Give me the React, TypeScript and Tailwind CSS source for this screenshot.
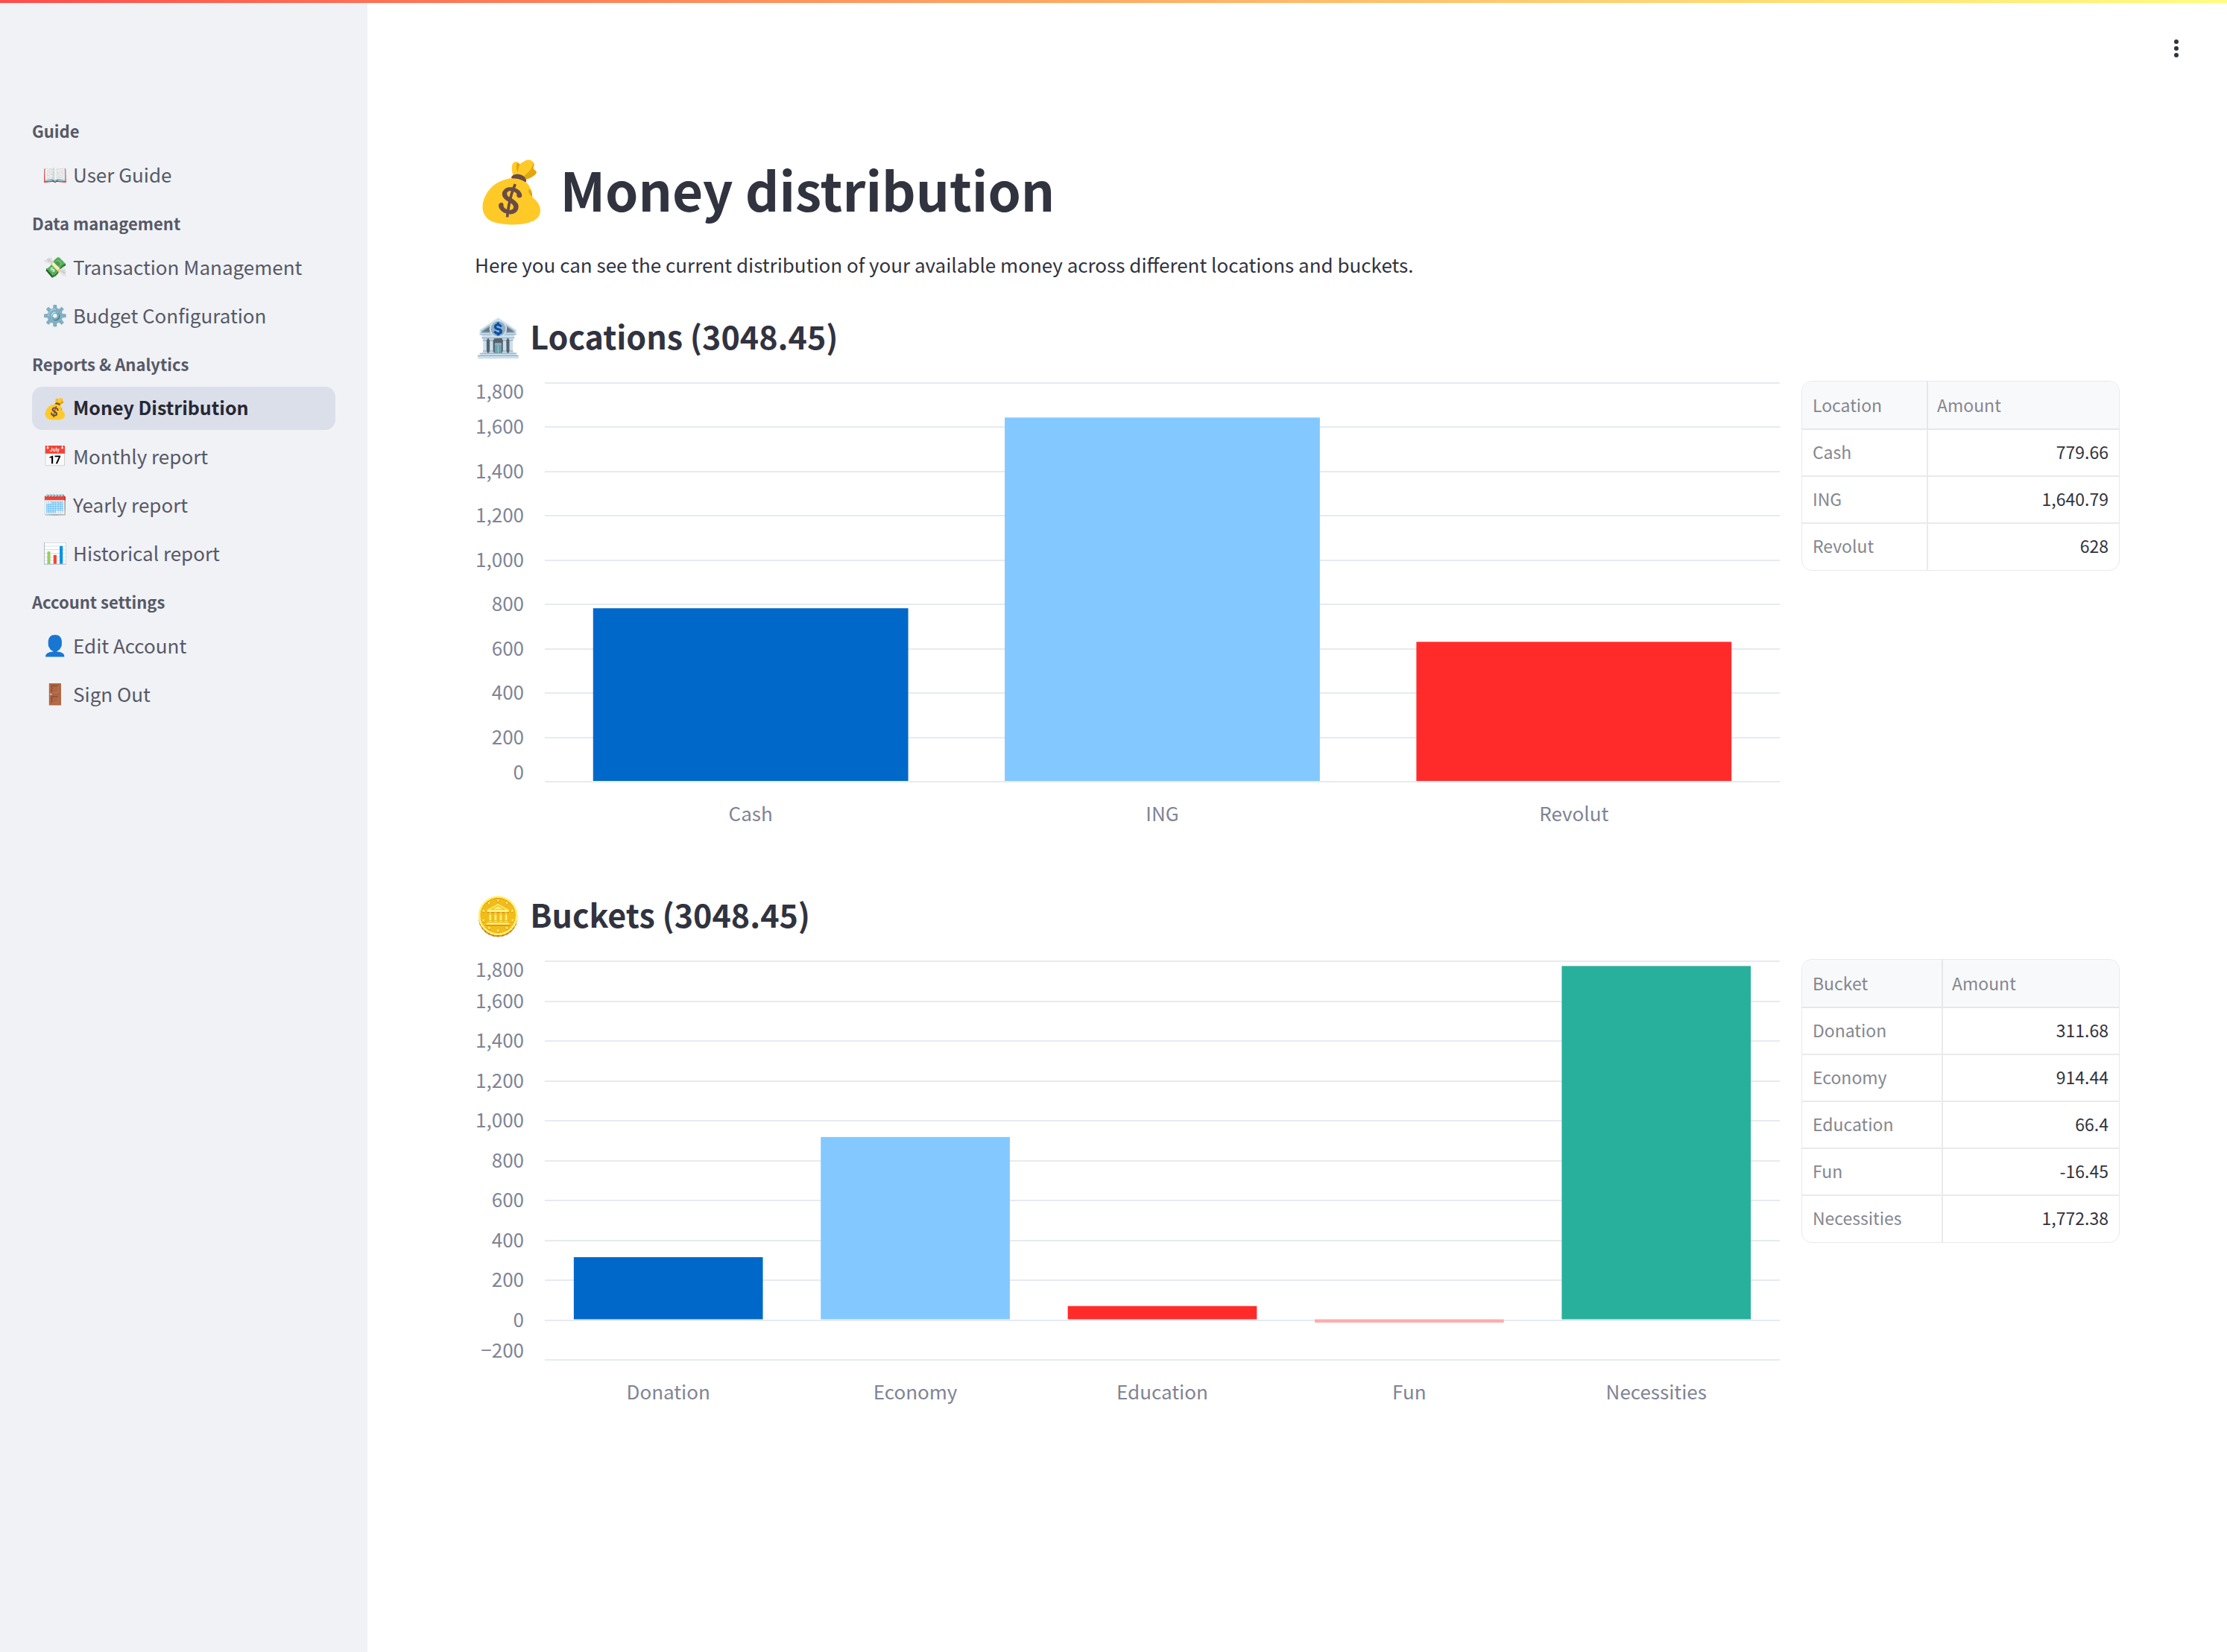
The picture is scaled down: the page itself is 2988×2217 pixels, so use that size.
type NavItem = { icon: string; label: string; active?: boolean };
type Row = { name: string; value: number; color: string };

const NAV: { title: string; items: NavItem[] }[] = [
  { title: "Guide", items: [{ icon: "📖", label: "User Guide" }] },
  {
    title: "Data management",
    items: [
      { icon: "💸", label: "Transaction Management" },
      { icon: "⚙️", label: "Budget Configuration" },
    ],
  },
  {
    title: "Reports & Analytics",
    items: [
      { icon: "💰", label: "Money Distribution", active: true },
      { icon: "📅", label: "Monthly report" },
      { icon: "🗓️", label: "Yearly report" },
      { icon: "📊", label: "Historical report" },
    ],
  },
  {
    title: "Account settings",
    items: [
      { icon: "👤", label: "Edit Account" },
      { icon: "🚪", label: "Sign Out" },
    ],
  },
];

const LOCATIONS: Row[] = [
  { name: "Cash", value: 779.66, color: "#0068c9" },
  { name: "ING", value: 1640.79, color: "#83c9ff" },
  { name: "Revolut", value: 628, color: "#ff2b2b" },
];

const BUCKETS: Row[] = [
  { name: "Donation", value: 311.68, color: "#0068c9" },
  { name: "Economy", value: 914.44, color: "#83c9ff" },
  { name: "Education", value: 66.4, color: "#ff2b2b" },
  { name: "Fun", value: -16.45, color: "#ffabab" },
  { name: "Necessities", value: 1772.38, color: "#29b09d" },
];

const PLOT_TOP = 2;
const PLOT_HEIGHT = 535;
const STEP = 200;
const MAX = 1800;

function tickLabel(n: number) {
  return n < 0 ? "\u2212" + Math.abs(n) : n.toLocaleString("en-US");
}

function BarChart({ rows, min, label }: { rows: Row[]; min: number; label: string }) {
  const ticks: number[] = [];
  for (let t = min; t <= MAX; t += STEP) ticks.push(t);
  const y = (v: number) => PLOT_TOP + ((MAX - v) / (MAX - min)) * PLOT_HEIGHT;
  const band = 100 / rows.length;
  const bar = band * 0.7655;

  return (
    <div className="flex min-w-0" role="img" aria-label={label}>
      <svg className="h-[620px] w-[94px] shrink-0 overflow-visible">
        {ticks.map((t) => (
          <text
            key={t}
            x={66}
            y={y(t) + 10 + (t === MAX ? 12 : t === min ? -12 : 0)}
            textAnchor="end"
            className="fill-[#808495] text-[26px]"
          >
            {tickLabel(t)}
          </text>
        ))}
      </svg>
      <svg className="h-[620px] min-w-0 flex-1">
        {ticks.map((t) => (
          <rect key={t} x="0" y={Math.round(y(t))} width="100%" height="2" fill="#e6eaf1" />
        ))}
        {rows.map((r, i) => (
          <g key={r.name}>
            <rect
              x={`${i * band + (band - bar) / 2}%`}
              width={`${bar}%`}
              y={Math.min(y(r.value), y(0))}
              height={Math.abs(y(r.value) - y(0))}
              fill={r.color}
            />
            <text
              x={`${(i + 0.5) * band}%`}
              y={PLOT_TOP + PLOT_HEIGHT + 54}
              textAnchor="middle"
              className="fill-[#808495] text-[26px]"
            >
              {r.name}
            </text>
          </g>
        ))}
      </svg>
    </div>
  );
}

function DataTable({ heading, rows, firstCol }: { heading: string; rows: Row[]; firstCol: string }) {
  return (
    <div className="self-start overflow-hidden rounded-[14px] border border-[#e8e9eb]">
      <table className="w-full table-fixed border-collapse text-[23px] leading-[30px]">
        <thead>
          <tr className="h-16 border-b-2 border-[#e6e7eb] bg-[#f8f9fb] text-left text-[#85878f]">
            <th scope="col" className={`${firstCol} border-r-2 border-[#e6e7eb] px-3.5 pb-0.5 font-normal`}>
              {heading}
            </th>
            <th scope="col" className="px-3 pb-0.5 font-normal">
              Amount
            </th>
          </tr>
        </thead>
        <tbody>
          {rows.map((r) => (
            <tr key={r.name} className="h-[63px] border-b-2 border-[#e9eaec] last:border-b-0">
              <td className="border-r-2 border-[#e9eaec] px-3.5 pb-1 text-[#85878f]">{r.name}</td>
              <td className="px-3.5 pb-1 text-right text-[#31333f]">{r.value.toLocaleString("en-US")}</td>
            </tr>
          ))}
        </tbody>
      </table>
    </div>
  );
}

function Section({
  icon,
  title,
  heading,
  rows,
  min,
  firstCol,
}: {
  icon: string;
  title: string;
  heading: string;
  rows: Row[];
  min: number;
  firstCol: string;
}) {
  return (
    <section className="flex flex-col gap-[29px]">
      <h2 className="flex h-16 items-center gap-3 text-[43px] leading-[64px] font-semibold">
        <span className="pb-0.5 text-[50px]">{icon}</span>
        <span>{title}</span>
      </h2>
      <div className="grid grid-cols-[4.1fr_1fr] gap-[29px]">
        <BarChart rows={rows} min={min} label={title} />
        <DataTable heading={heading} rows={rows} firstCol={firstCol} />
      </div>
    </section>
  );
}

export default function App() {
  return (
    <div className="flex min-h-screen flex-col bg-white font-['Noto_Sans_CJK_SC','Noto_Color_Emoji',sans-serif] text-[#31333f]">
      <div className="absolute inset-x-0 top-0 h-1 bg-linear-to-r from-[#ff4b4b] to-[#fffd80]" />
      <div className="flex flex-1">
        <aside className="w-[493px] shrink-0 bg-[#f0f2f6] px-[43px] pt-[155px]">
          <nav>
            {NAV.map((group) => (
              <div key={group.title} className="mb-[15px] flex flex-col gap-[7px]">
                <h3 className="pb-1 text-[22px] leading-[40px] font-semibold text-[#575966]">{group.title}</h3>
                {group.items.map((item) => (
                  <a
                    key={item.label}
                    href="#"
                    aria-current={item.active ? "page" : undefined}
                    className={
                      item.active
                        ? "flex h-[58px] items-center gap-1.5 rounded-[14px] bg-[#dbdfea] px-[13px] pb-0.5 text-[25px] font-semibold text-[#262833]"
                        : "flex h-[58px] items-center gap-1.5 rounded-[14px] px-[13px] pb-1 text-[26px] text-[#575966]"
                    }
                  >
                    <span className="w-9 text-center text-[27px]">{item.icon}</span>
                    <span>{item.label}</span>
                  </a>
                ))}
              </div>
            ))}
          </nav>
        </aside>
        <main className="min-w-0 flex-1 px-36 pt-[205px]">
          <h1 className="flex h-24 items-center gap-4 text-[71px] leading-[96px] font-bold">
            <span className="pb-1 text-[79px]">💰</span>
            <span>Money distribution</span>
          </h1>
          <p className="mt-8 mb-[41px] text-[26px] leading-[44px]">
            Here you can see the current distribution of your available money across different locations and buckets.
          </p>
          <div className="flex flex-col gap-[63px]">
            <Section
              icon="🏦"
              title="Locations (3048.45)"
              heading="Location"
              rows={LOCATIONS}
              min={0}
              firstCol="w-[168px]"
            />
            <Section
              icon="🪙"
              title="Buckets (3048.45)"
              heading="Bucket"
              rows={BUCKETS}
              min={-200}
              firstCol="w-[188px]"
            />
          </div>
        </main>
      </div>
      <button
        type="button"
        aria-label="Main menu"
        className="absolute top-9 right-10 flex size-14 items-center justify-center"
      >
        <svg viewBox="0 0 28 28" className="size-7 fill-[#31333f]">
          <circle cx="14" cy="6" r="3" />
          <circle cx="14" cy="15" r="3" />
          <circle cx="14" cy="24" r="3" />
        </svg>
      </button>
    </div>
  );
}
